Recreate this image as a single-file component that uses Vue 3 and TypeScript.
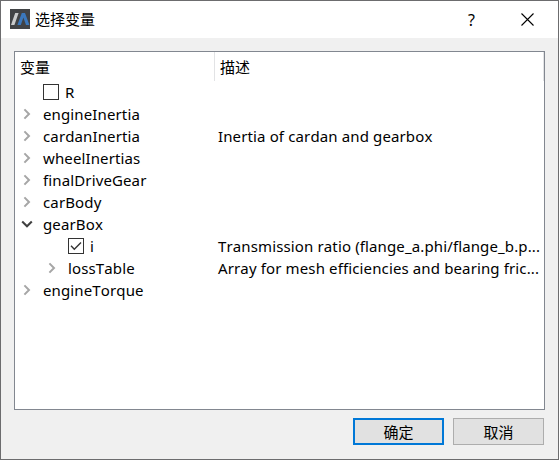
<script setup lang="ts">
import { ref } from 'vue'

interface VariableRow {
  name: string
  description?: string
  level: number
  kind: 'check' | 'closed' | 'open'
  checked?: boolean
}

const rows = ref<VariableRow[]>([
  { name: 'R', level: 0, kind: 'check', checked: false },
  { name: 'engineInertia', level: 0, kind: 'closed' },
  { name: 'cardanInertia', level: 0, kind: 'closed', description: 'Inertia of cardan and gearbox' },
  { name: 'wheelInertias', level: 0, kind: 'closed' },
  { name: 'finalDriveGear', level: 0, kind: 'closed' },
  { name: 'carBody', level: 0, kind: 'closed' },
  { name: 'gearBox', level: 0, kind: 'open' },
  { name: 'i', level: 1, kind: 'check', checked: true, description: 'Transmission ratio (flange_a.phi/flange_b.p...' },
  { name: 'lossTable', level: 1, kind: 'closed', description: 'Array for mesh efficiencies and bearing fric...' },
  { name: 'engineTorque', level: 0, kind: 'closed' },
])
</script>

<template>
  <div class="dialog">
    <header class="titlebar">
      <svg class="logo" width="20" height="20" viewBox="0 0 20 20">
        <rect width="20" height="20" fill="#414346" />
        <path d="M1 16 L5.2 4 H8.6 L4.4 16Z" fill="#c9cbcc" />
        <path d="M7.4 16 L11.8 4 H15 L19.4 16 H16 L13.4 8.4 L10.8 16Z" fill="#3b78bd" />
      </svg>
      <h1 class="title">选择变量</h1>
      <button class="caption help" aria-label="Help">?</button>
      <button class="caption close" aria-label="Close">
        <svg width="13" height="13" viewBox="0 0 13 13">
          <path d="M0.5 0.5 L12.5 12.5 M12.5 0.5 L0.5 12.5" stroke="#000" stroke-width="1.1" />
        </svg>
      </button>
    </header>

    <main class="body">
      <section class="tree">
        <div class="head">
          <div class="col">变量</div>
          <div class="col desc">描述</div>
        </div>
        <div v-for="row in rows" :key="row.name" class="row">
          <div class="name" :class="{ nested: row.level === 1 }">
            <span class="arrow">
              <svg v-if="row.kind === 'closed'" width="8" height="12" viewBox="0 0 8 12">
                <path d="M1.4 1.4 L6 6 L1.4 10.6" fill="none" stroke="#a6a6a6" stroke-width="2" />
              </svg>
              <svg v-else-if="row.kind === 'open'" width="12" height="8" viewBox="0 0 12 8">
                <path d="M1.2 1.6 L6 6.2 L10.8 1.6" fill="none" stroke="#404040" stroke-width="2.1" />
              </svg>
            </span>
            <svg v-if="row.kind === 'check'" class="box" width="16" height="16" viewBox="0 0 16 16">
              <rect x="0.5" y="0.5" width="15" height="15" fill="#fff" stroke="#333" />
              <path v-if="row.checked" d="M3 7.8 L6.3 11.2 L13 4.5" fill="none" stroke="#333" stroke-width="1.4" />
            </svg>
            <span>{{ row.name }}</span>
          </div>
          <div class="text">{{ row.description }}</div>
        </div>
      </section>
      <footer class="actions">
        <button class="btn primary">确定</button>
        <button class="btn">取消</button>
      </footer>
    </main>
  </div>
</template>

<style>
body {
  margin: 0;
}
</style>

<style scoped>
.dialog {
  box-sizing: border-box;
  width: 559px;
  height: 460px;
  display: flex;
  flex-direction: column;
  border: 1px solid #6c6c6e;
  background: #f0f0f0;
  color: #000;
  font-family: "Noto Sans", "Noto Sans CJK SC", sans-serif;
  font-size: 15px;
}
button {
  padding: 0;
  font: inherit;
  color: inherit;
}
.titlebar {
  height: 37px;
  display: flex;
  align-items: center;
  padding-left: 9px;
  background: #fff;
}
.logo {
  display: block;
  margin-top: -1px;
}
.title {
  flex: 1;
  margin: -2px 0 0 5px;
  font-size: 15px;
  font-weight: 400;
  line-height: 22px;
}
.caption {
  height: 36px;
  display: flex;
  align-items: center;
  justify-content: center;
  border: 0;
  background: none;
}
.help {
  width: 55px;
  font-size: 16px;
}
.close {
  width: 59px;
  padding-right: 2px;
}
.body {
  flex: 1;
  display: flex;
  flex-direction: column;
  padding: 13px 13px 0;
}
.tree {
  box-sizing: border-box;
  height: 359px;
  border: 1px solid #828790;
  background: #fff;
}
.head {
  display: flex;
  height: 29px;
  line-height: 30px;
}
.col {
  box-sizing: border-box;
  width: 200px;
  padding-left: 5px;
  border-right: 1px solid #e2e3e5;
}
.desc {
  width: 329px;
}
.row {
  display: flex;
  height: 22px;
  line-height: 22px;
  white-space: nowrap;
  font-kerning: none;
  letter-spacing: 0.13px;
}
.name {
  box-sizing: border-box;
  width: 203px;
  display: flex;
  align-items: center;
}
.nested {
  padding-left: 25px;
}
.arrow {
  width: 28px;
  box-sizing: border-box;
  padding-right: 4px;
  display: flex;
  justify-content: center;
}
.box {
  margin-right: 6px;
}
.text {
  flex: 1;
}
.actions {
  display: flex;
  justify-content: flex-end;
  gap: 9px;
  padding: 8px 1px 0 0;
}
.btn {
  box-sizing: border-box;
  width: 91px;
  height: 27px;
  border: 1px solid #adadad;
  background: #e1e1e1;
  line-height: 22px;
}
.primary {
  border: 2px solid #0078d7;
}
</style>
